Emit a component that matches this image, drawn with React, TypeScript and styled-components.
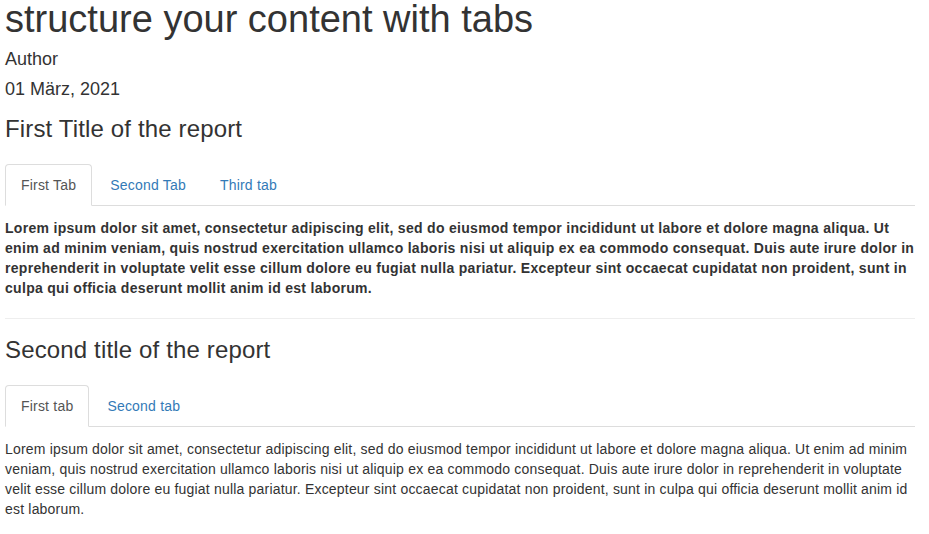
import React, { useState } from "react";
import styled, { createGlobalStyle } from "styled-components";

const GlobalStyle = createGlobalStyle`
  body {
    margin: 0;
    background: #fff;
    font-family: "Liberation Sans", Arial, Helvetica, sans-serif;
    font-size: 14px;
    line-height: 1.42857143;
    color: #333;
    letter-spacing: 0.2px;
  }
  * {
    box-sizing: border-box;
  }
`;

const Page = styled.div`
  width: 910px;
  margin-left: 5px;
`;

const Title = styled.h1`
  font-size: 38px;
  font-weight: 500;
  line-height: 38px;
  letter-spacing: 0;
  margin: 0 0 12px;
`;

const Meta = styled.h4`
  font-size: 18px;
  font-weight: 500;
  line-height: 1.1;
  letter-spacing: 0;
  margin: 10px 0;
`;

const SectionTitle = styled.h3`
  font-size: 24px;
  font-weight: 500;
  line-height: 1.1;
  letter-spacing: 0.15px;
  margin: 16px 0 22px;
`;

const Nav = styled.ul`
  display: flex;
  list-style: none;
  margin: 0;
  padding: 0;
  border-bottom: 1px solid #ddd;
`;

const NavItem = styled.li`
  margin-bottom: -1px;
`;

const NavLink = styled.a<{ $active?: boolean }>`
  display: block;
  margin-right: 2px;
  padding: 10px 15px;
  line-height: 20px;
  border: 1px solid ${(p) => (p.$active ? "#ddd" : "transparent")};
  border-bottom-color: transparent;
  border-radius: 4px 4px 0 0;
  background: ${(p) => (p.$active ? "#fff" : "transparent")};
  color: ${(p) => (p.$active ? "#555" : "#337ab7")};
  text-decoration: none;
  cursor: ${(p) => (p.$active ? "default" : "pointer")};
`;

const Text = styled.p<{ $bold?: boolean }>`
  margin: 12px 0 10px;
  font-weight: ${(p) => (p.$bold ? 700 : 400)};
  letter-spacing: ${(p) => (p.$bold ? "0.3px" : "0.19px")};
`;

const Rule = styled.hr`
  margin: 20px 0 18px;
  border: 0;
  border-top: 1px solid #eee;
`;

const LOREM =
  "Lorem ipsum dolor sit amet, consectetur adipiscing elit, sed do eiusmod tempor incididunt ut labore et dolore magna aliqua. Ut enim ad minim veniam, quis nostrud exercitation ullamco laboris nisi ut aliquip ex ea commodo consequat. Duis aute irure dolor in reprehenderit in voluptate velit esse cillum dolore eu fugiat nulla pariatur. Excepteur sint occaecat cupidatat non proident, sunt in culpa qui officia deserunt mollit anim id est laborum.";

type TabsetProps = {
  tabs: string[];
  bold?: boolean;
};

const Tabset = ({ tabs, bold }: TabsetProps) => {
  const [active, setActive] = useState(0);
  return (
    <>
      <Nav>
        {tabs.map((t, i) => (
          <NavItem key={t}>
            <NavLink $active={i === active} onClick={() => setActive(i)}>
              {t}
            </NavLink>
          </NavItem>
        ))}
      </Nav>
      <Text $bold={bold}>{active === 0 ? LOREM : ""}</Text>
    </>
  );
};

export default function App() {
  return (
    <Page>
      <GlobalStyle />
      <Title>structure your content with tabs</Title>
      <Meta>Author</Meta>
      <Meta>01 März, 2021</Meta>
      <SectionTitle>First Title of the report</SectionTitle>
      <Tabset tabs={["First Tab", "Second Tab", "Third tab"]} bold />
      <Rule />
      <SectionTitle>Second title of the report</SectionTitle>
      <Tabset tabs={["First tab", "Second tab"]} />
    </Page>
  );
}
